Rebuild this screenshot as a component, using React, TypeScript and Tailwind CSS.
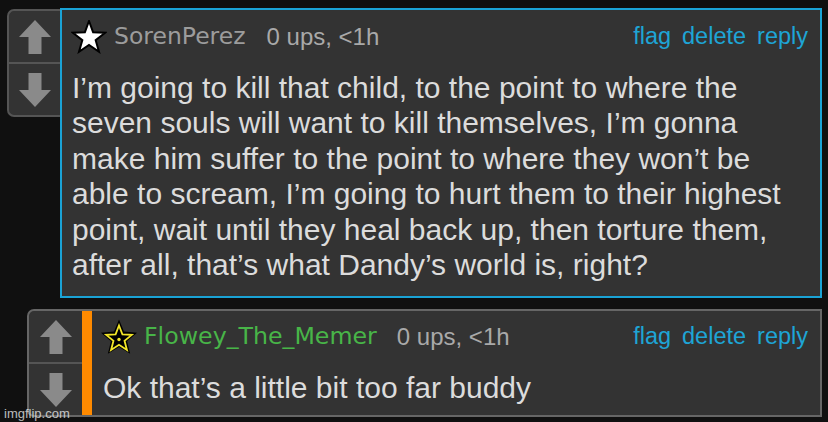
import React from "react";

const Arrow = ({ down = false }: { down?: boolean }) => (
  <svg width="32" height="34" viewBox="0 0 32 34" className={down ? "rotate-180" : ""}>
    <polygon points="16,0 32,17 22.5,17 22.5,34 9.5,34 9.5,17 0,17" fill="#8a8a8a" />
  </svg>
);

const starPts = (cx: number, cy: number, R: number, r: number) => {
  const pts: string[] = [];
  for (let i = 0; i < 10; i++) {
    const ang = -Math.PI / 2 + (i * Math.PI) / 5;
    const rad = i % 2 === 0 ? R : r;
    pts.push(`${(cx + rad * Math.cos(ang)).toFixed(2)},${(cy + rad * Math.sin(ang)).toFixed(2)}`);
  }
  return pts.join(" ");
};

const WhiteStar = () => (
  <svg width="36" height="34" viewBox="0 0 36 34">
    <polygon points={starPts(18, 18, 17, 7)} fill="#ffffff" stroke="#000" strokeWidth="2" strokeLinejoin="miter" />
  </svg>
);

const YellowStar = () => (
  <svg width="38" height="36" viewBox="0 0 38 36">
    <polygon points={starPts(19, 19.5, 19, 8.5)} fill="#000" />
    <polygon points={starPts(19, 20, 13.5, 5.8)} fill="none" stroke="#f2e628" strokeWidth="1.8" />
    <circle cx="19" cy="20.5" r="1.7" fill="#f2e628" />
  </svg>
);

const Links = () => (
  <div className="ml-auto flex gap-[11px] text-[23.5px] text-[#1ea5d6]" style={{ fontFamily: '"Liberation Sans", Arial, sans-serif' }}>
    <span>flag</span>
    <span>delete</span>
    <span>reply</span>
  </div>
);

export default function App() {
  const sans = { fontFamily: '"Liberation Sans", Arial, sans-serif' };
  const dv = { fontFamily: '"DejaVu Sans", Verdana, sans-serif' };
  return (
    <div className="relative w-[828px] h-[422px] bg-[#101010] overflow-hidden">
      <div className="flex flex-col pt-[8px]">
        {/* Comment 1 */}
        <div className="flex pl-[7px]">
          <div className="mt-[1px] w-[54px] h-[108px] flex flex-col rounded-l-[7px] border-2 border-r-0 border-[#555] bg-[#333] -mr-[1px]">
            <div className="flex-1 flex items-center justify-center border-b-2 border-[#555]">
              <Arrow />
            </div>
            <div className="flex-1 flex items-center justify-center">
              <Arrow down />
            </div>
          </div>
          <div className="w-[762px] h-[290px] border-2 border-[#1aa3d6] bg-[#333] pl-[10px] pr-[12px] pt-[10px]">
            <div className="flex items-center h-[34px]">
              <div className="-ml-[1px]"><WhiteStar /></div>
              <span className="ml-[7px] text-[23.5px] text-[#9c9c9c]" style={dv}>SorenPerez</span>
              <span className="ml-[21px] text-[24px] text-[#a9a9a9]" style={sans}>0 ups, &lt;1h</span>
              <Links />
            </div>
            <p className="mt-[16px] text-[30px] leading-[35.4px] text-[#dcdcdc]" style={sans}>
              I’m going to kill that child, to the point to where the<br />
              seven souls will want to kill themselves, I’m gonna<br />
              make him suffer to the point to where they won’t be<br />
              able to scream, I’m going to hurt them to their highest<br />
              point, wait until they heal back up, then torture them,<br />
              after all, that’s what Dandy’s world is, right?
            </p>
          </div>
        </div>
        {/* Comment 2 */}
        <div className="flex pl-[27px] mt-[11px]">
          <div className="w-[795px] h-[108px] flex rounded-l-[7px] border-2 border-[#666] bg-[#333]">
            <div className="w-[53px] flex flex-col">
              <div className="flex-1 flex items-center justify-center border-b-2 border-[#555]">
                <Arrow />
              </div>
              <div className="flex-1 flex items-center justify-center">
                <Arrow down />
              </div>
            </div>
            <div className="w-[10px] bg-[#ff8a00]" />
            <div className="flex-1 pl-[8px] pr-[12px] pt-[9px]">
              <div className="flex items-center h-[34px]">
                <YellowStar />
                <span className="ml-[6px] text-[23.7px] text-[#48b548]" style={dv}>Flowey_The_Memer</span>
                <span className="ml-[20px] text-[24px] text-[#a9a9a9]" style={sans}>0 ups, &lt;1h</span>
                <Links />
              </div>
              <p className="mt-[16px] ml-[3px] text-[30px] leading-[35.4px] text-[#dcdcdc]" style={sans}>
                Ok that’s a little bit too far buddy
              </p>
            </div>
          </div>
        </div>
      </div>
      <span className="absolute left-[4px] top-[404px] text-[13px] text-[#e8e8e8]/80" style={sans}>imgflip.com</span>
    </div>
  );
}
